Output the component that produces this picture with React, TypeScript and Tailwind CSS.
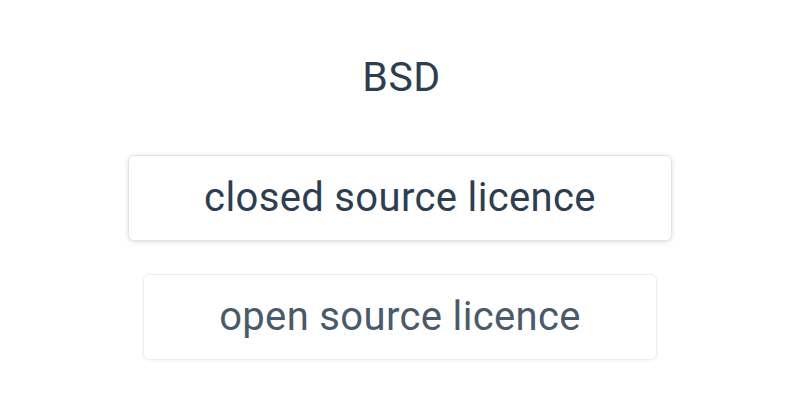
export default function App() {
  return (
    <div
      className="w-[800px] h-[400px] bg-white flex flex-col items-center text-[#2c3e50]"
      style={{ fontFamily: 'Roboto, "Liberation Sans", sans-serif' }}
    >
      <div className="pt-[47px] pl-[3px] text-[41px] leading-[60px] tracking-[0.5px]">BSD</div>

      <div className="mt-[48px] px-[75px] py-[12px] bg-white border border-[#e4e4e4] rounded-md shadow-[0_1px_5px_rgba(0,0,0,0.13)] text-[40px] leading-[60px] tracking-[0.35px]">
        closed source licence
      </div>

      <div className="mt-[33px] px-[75px] py-[12px] bg-white border border-[#ececec] rounded-md shadow-[0_1px_3px_rgba(0,0,0,0.06)] text-[40px] leading-[60px] tracking-[0.35px] opacity-85">
        open source licence
      </div>
    </div>
  );
}
